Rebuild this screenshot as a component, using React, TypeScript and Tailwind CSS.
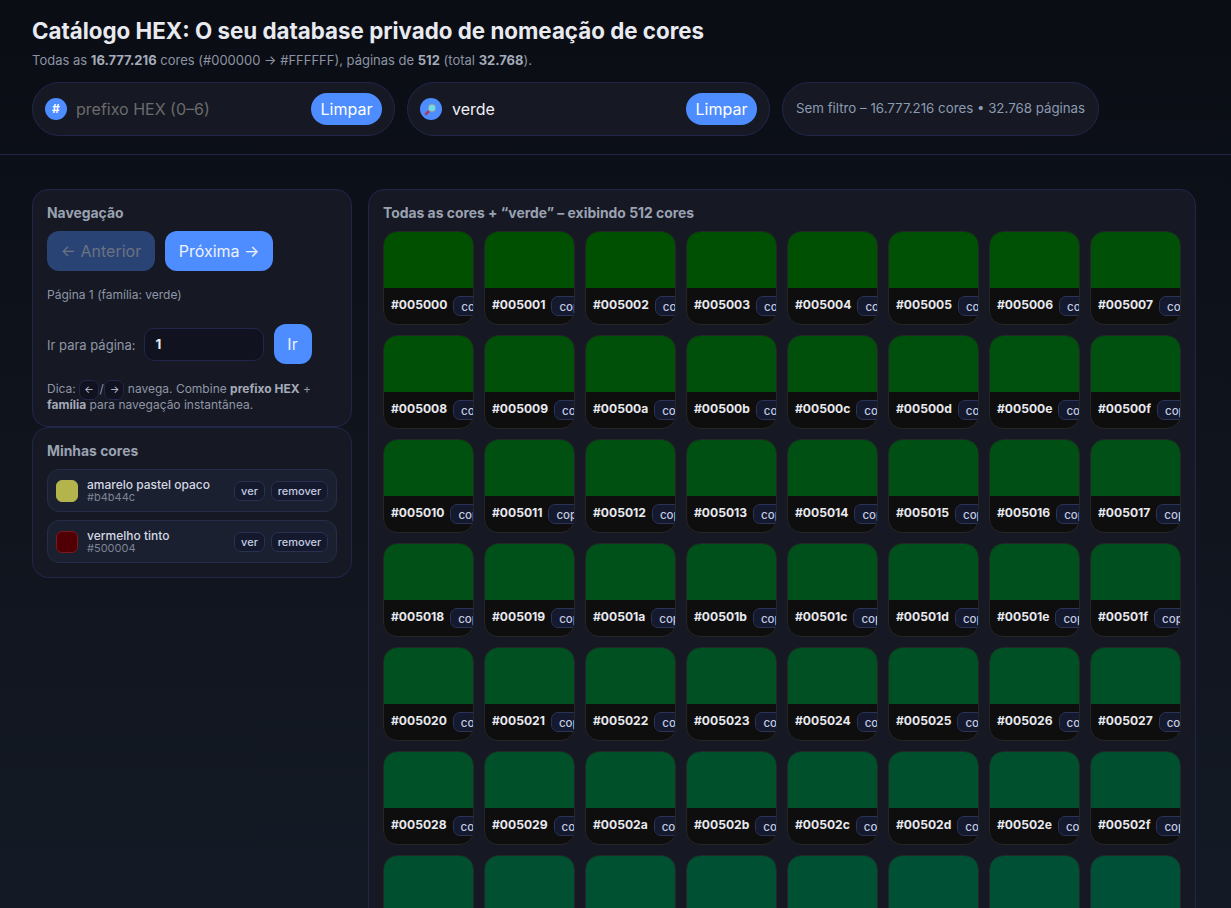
import React from "react";

const hexes: string[] = Array.from({ length: 56 }, (_, i) => "#" + (0x005000 + i).toString(16).padStart(6, "0"));

function Card({ hex }: { hex: string }) {
  return (
    <div className="h-[94px] rounded-[14px] border border-[#262626] bg-[#0e0e0e] overflow-hidden flex flex-col">
      <div className="h-[56px] shrink-0" style={{ background: hex }} />
      <div className="flex items-center gap-[6px] pl-[7px] h-[36px] overflow-hidden">
        <span className="text-[12.1px] leading-[16px] -mt-[2px] font-bold text-[#e8eaf0] shrink-0">{hex}</span>
        <span className="shrink-0 h-[20px] px-[7px] rounded-[7px] border border-[#2a3358] bg-[#14192e] text-[11.5px] leading-[20px] text-[#c5cbe0] font-medium">copiar</span>
      </div>
    </div>
  );
}

function Pill({ icon, value, placeholder }: { icon: React.ReactNode; value?: string; placeholder?: string }) {
  return (
    <div className="w-[363px] h-[54px] rounded-full border border-[#22264a] bg-[#161824] flex items-center pl-[12px] pr-[12px] gap-[9px]">
      <span className="w-[22px] h-[22px] rounded-full bg-[#4d8dff] flex items-center justify-center shrink-0 text-white text-[12px] font-bold">{icon}</span>
      <span className={"flex-1 text-[16px] " + (value ? "text-[#eef0f6] pl-px" : "text-[#6b6b6b]")}>{value || placeholder}</span>
      <span className="w-[71px] h-[32px] rounded-[16px] bg-[#4d8dff] text-white text-[16px] flex items-center justify-center">Limpar</span>
    </div>
  );
}

function Saved({ swatch, border, name, hex }: { swatch: string; border: string; name: string; hex: string }) {
  return (
    <div className="h-[43px] rounded-[12px] border border-[#262c4a] bg-[#1a2030] flex items-center pl-[8px] pr-[8px]">
      <span className="w-[22px] h-[22px] rounded-[6px] border shrink-0" style={{ background: swatch, borderColor: border }} />
      <div className="ml-[9px] flex-1 flex flex-col">
        <span className="text-[12px] leading-[13px] font-medium text-[#d5d8e2]">{name}</span>
        <span className="text-[11px] leading-[13px] text-[#7d8494]">{hex}</span>
      </div>
      <span className="w-[31px] h-[20px] text-center rounded-[7px] border border-[#2a3050] bg-[#14192e] text-[11px] leading-[18px] font-medium text-[#c5cbe0]">ver</span>
      <span className="ml-[6px] w-[57px] h-[20px] text-center rounded-[7px] border border-[#2a3050] bg-[#14192e] text-[11px] leading-[18px] font-medium text-[#c5cbe0]">remover</span>
    </div>
  );
}

function Kbd({ children }: { children: React.ReactNode }) {
  return (
    <span className="inline-flex w-[20px] h-[20px] -my-[3px] items-center justify-center rounded-[7px] border border-[#22264a] bg-[#10131f] text-[10px] text-[#c5cbe0] align-middle">{children}</span>
  );
}

export default function App() {
  return (
    <div className="h-[908px] overflow-hidden bg-[linear-gradient(180deg,#0a0d14,#141a25)] font-['Inter',sans-serif]">
      <header className="h-[155px] border-b border-[#22264a] pl-[32px] pt-[16px]">
        <h1 className="text-[22.33px] leading-[30px] font-bold text-[#e8eaf0]">Catálogo HEX: O seu database privado de nomeação de cores</h1>
        <p className="mt-[6px] text-[13px] leading-[16px] text-[#8b93a3]">
          Todas as <b className="text-[#a4abb9]">16.777.216</b> cores (#000000 → #FFFFFF), páginas de <b className="text-[#a4abb9]">512</b> (total <b className="text-[#a4abb9]">32.768</b>).
        </p>
        <div className="mt-[14px] flex gap-[12px]">
          <Pill icon="#" placeholder="prefixo HEX (0–6)" />
          <Pill
            value="verde"
            icon={
              <svg width="16" height="16" viewBox="0 0 16 16">
                <path d="M6.5 9.5 L3 13" stroke="#a83a5e" strokeWidth="2.6" strokeLinecap="round" />
                <circle cx="9" cy="7" r="3.9" fill="#6fdcec" stroke="#8a94a8" strokeWidth="1" />
              </svg>
            }
          />
          <div className="h-[54px] rounded-full border border-[#22264a] bg-[#161824] flex items-center px-[13px] text-[13.3px] text-[#8b9bb0]">
            Sem filtro – 16.777.216 cores • 32.768 páginas
          </div>
        </div>
      </header>
      <main className="flex gap-[16px] pl-[32px] pr-[35px] pt-[34px] items-start">
        <aside className="w-[320px] shrink-0 flex flex-col">
          <section className="h-[238px] rounded-[16px] border border-[#22264a] bg-[#161824] px-[14px] pt-[14px]">
            <h2 className="text-[13.9px] leading-[18px] font-bold text-[#9aa2b1]">Navegação</h2>
            <div className="mt-[9px] flex gap-[10px]">
              <span className="w-[108px] h-[40px] rounded-[12px] bg-[#2a4375] text-[#6b7280] text-[16px] flex items-center justify-center">← Anterior</span>
              <span className="w-[108px] h-[40px] rounded-[12px] bg-[#4d8dff] text-[#eef2fb] text-[16px] flex items-center justify-center">Próxima →</span>
            </div>
            <p className="mt-[16px] text-[12px] leading-[16px] text-[#8f96a5]">Página 1 (família: verde)</p>
            <div className="mt-[21px] flex items-center">
              <span className="text-[13px] leading-[20px] mt-[1px] text-[#8f96a5]">Ir para página:</span>
              <span className="ml-[8px] w-[120px] h-[33px] rounded-[10px] border border-[#22264a] bg-[#10131f] pl-[11px] text-[13.5px] font-bold leading-[31px] text-[#e8eaf0]">1</span>
              <span className="ml-[10px] w-[38px] h-[40px] rounded-[12px] bg-[#4d8dff] text-[#eef2fb] text-[16px] flex items-center justify-center">Ir</span>
            </div>
            <p className="mt-[17px] text-[12px] leading-[15px] text-[#8f96a5]">
              Dica: <Kbd>←</Kbd>
              <span className="mx-[0.5px]">/</span>
              <Kbd>→</Kbd> navega. Combine <b className="text-[#a4abb9]">prefixo HEX</b> + <b className="text-[#a4abb9]">família</b> para navegação instantânea.
            </p>
          </section>
          <section className="h-[151px] rounded-[16px] border border-[#22264a] bg-[#161824] px-[14px] pt-[14px]">
            <h2 className="text-[13.9px] leading-[18px] font-bold text-[#9aa2b1]">Minhas cores</h2>
            <div className="mt-[9px] flex flex-col gap-[8px]">
              <Saved swatch="#b4b44c" border="#b4b44c" name="amarelo pastel opaco" hex="#b4b44c" />
              <Saved swatch="#500004" border="#7a1a1e" name="vermelho tinto" hex="#500004" />
            </div>
          </section>
        </aside>
        <section className="flex-1 min-w-0 rounded-[16px] border border-[#22264a] bg-[#161824] px-[14px] pt-[14px] pb-[14px]">
          <h2 className="text-[13.9px] leading-[18px] font-bold text-[#9aa2b1]">Todas as cores + “verde” – exibindo 512 cores</h2>
          <div className="mt-[9px] grid grid-cols-8 gap-[10px]">
            {hexes.map((h) => (
              <Card key={h} hex={h} />
            ))}
          </div>
        </section>
      </main>
    </div>
  );
}
